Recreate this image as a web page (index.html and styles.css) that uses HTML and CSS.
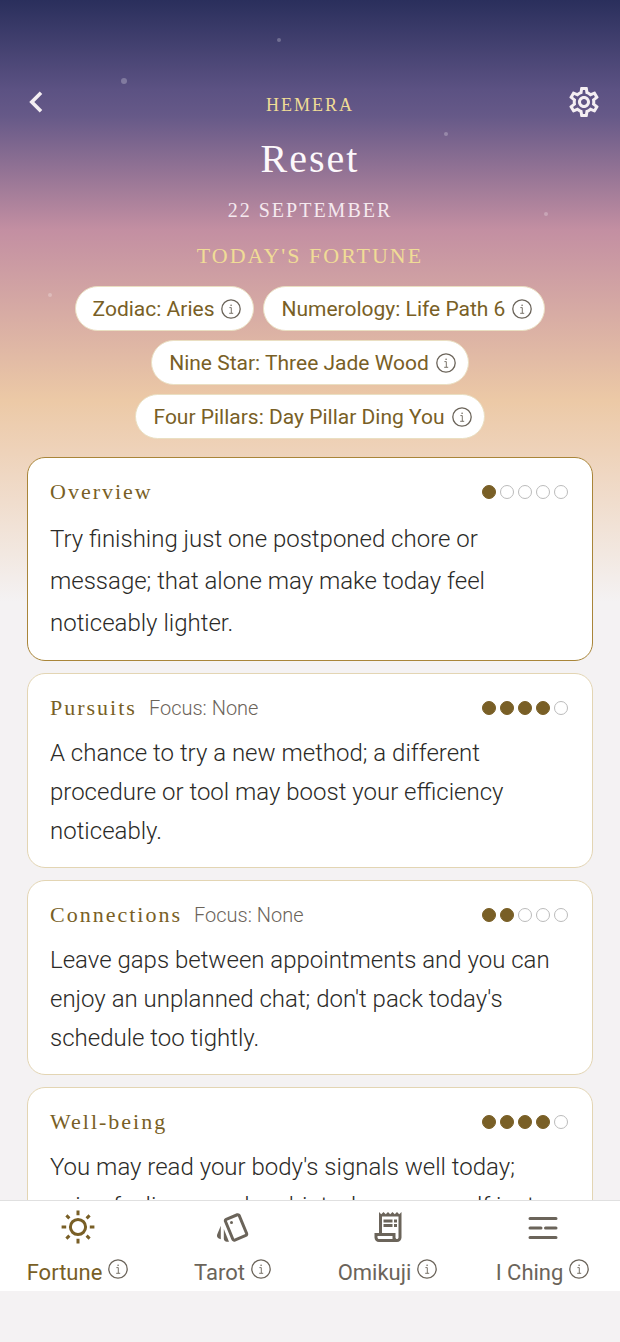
FILE: index.html
```html
<!DOCTYPE html>
<html lang="en">
<head>
    <meta charset="UTF-8">
    <meta name="viewport" content="width=device-width, initial-scale=1.0">
    <title>Hemera</title>
    <link rel="stylesheet" href="styles.css">
</head>
<body>
    <svg class="sprite" aria-hidden="true">
        <symbol id="info" viewBox="0 0 20 20">
            <circle cx="10" cy="10" r="9.2" fill="none" stroke="currentColor" stroke-width="1.3"/>
            <path d="M8.4 8.6h1.900v5.600M8.2 14.300h4" fill="none" stroke="currentColor" stroke-width="0.9"/>
            <circle cx="10.1" cy="6.3" r="0.8" fill="currentColor"/>
        </symbol>
    </svg>

    <!-- Stars in the sky -->
    <div class="stars" aria-hidden="true">
        <span class="star star-1"></span>
        <span class="star star-2"></span>
        <span class="star star-3"></span>
        <span class="star star-4"></span>
        <span class="star star-5"></span>
    </div>

    <header class="header">
        <button class="icon-button back" type="button" aria-label="Back">
            <svg width="36" height="36" viewBox="0 0 36 36" fill="none" stroke="currentColor" stroke-width="3.6"><path d="M23 8.800l-9.200 9.200 9.200 9.200"/></svg>
        </button>
        <div class="titles">
            <p class="brand">HEMERA</p>
            <h1>Reset</h1>
            <p class="date">22 SEPTEMBER</p>
            <p class="subtitle">TODAY'S FORTUNE</p>
        </div>
        <button class="icon-button settings" type="button" aria-label="Settings">
            <svg width="36" height="36" viewBox="0 0 24 24" fill="currentColor"><path d="M19.43 12.98c.04-.32.07-.64.07-.98 0-.34-.03-.66-.07-.98l2.11-1.65c.19-.15.24-.42.12-.64l-2-3.46c-.09-.16-.26-.25-.44-.25-.06 0-.12.01-.17.03l-2.49 1c-.52-.4-1.08-.73-1.69-.98l-.38-2.65C14.46 2.18 14.25 2 14 2h-4c-.25 0-.46.18-.49.42l-.38 2.65c-.61.25-1.17.59-1.69.98l-2.49-1c-.06-.02-.12-.03-.18-.03-.17 0-.34.09-.43.25l-2 3.46c-.13.22-.07.49.12.64l2.11 1.65c-.04.32-.07.65-.07.98 0 .33.03.66.07.98l-2.11 1.65c-.19.15-.24.42-.12.64l2 3.46c.09.16.26.25.44.25.06 0 .12-.01.17-.03l2.49-1c.52.4 1.08.73 1.69.98l.38 2.65c.03.24.24.42.49.42h4c.25 0 .46-.18.49-.42l.38-2.65c.61-.25 1.17-.59 1.69-.98l2.49 1c.06.02.12.03.18.03.17 0 .34-.09.43-.25l2-3.46c.12-.22.07-.49-.12-.64l-2.11-1.65zm-1.98-1.71c.04.31.05.52.05.73 0 .21-.02.43-.05.73l-.14 1.13.89.7 1.08.84-.7 1.21-1.27-.51-1.04-.42-.9.68c-.43.32-.84.56-1.25.73l-1.06.43-.16 1.13-.2 1.35h-1.4l-.19-1.35-.16-1.13-1.06-.43c-.43-.18-.83-.41-1.23-.71l-.91-.7-1.06.43-1.27.51-.7-1.21 1.08-.84.89-.7-.14-1.13c-.03-.31-.05-.54-.05-.74s.02-.43.05-.73l.14-1.13-.89-.7-1.08-.84.7-1.21 1.27.51 1.04.42.9-.68c.43-.32.84-.56 1.25-.73l1.06-.43.16-1.13.2-1.35h1.39l.19 1.35.16 1.13 1.06.43c.43.18.83.41 1.23.71l.91.7 1.06-.43 1.27-.51.7 1.21-1.07.85-.89.7.14 1.13zM12 8c-2.21 0-4 1.79-4 4s1.79 4 4 4 4-1.79 4-4-1.79-4-4-4zm0 6c-1.1 0-2-.9-2-2s.9-2 2-2 2 .9 2 2-.9 2-2 2z"/></svg>
        </button>
    </header>

    <main class="content">
        <div class="tags">
            <button class="tag" type="button">Zodiac: Aries <svg class="info"><use href="#info"/></svg></button>
            <button class="tag" type="button">Numerology: Life Path 6 <svg class="info"><use href="#info"/></svg></button>
            <button class="tag" type="button">Nine Star: Three Jade Wood <svg class="info"><use href="#info"/></svg></button>
            <button class="tag" type="button">Four Pillars: Day Pillar Ding You <svg class="info"><use href="#info"/></svg></button>
        </div>

        <section class="card overview">
            <div class="card-head">
                <h2>Overview</h2>
                <div class="score" role="img" aria-label="1 of 5">
                    <i class="on"></i><i></i><i></i><i></i><i></i>
                </div>
            </div>
            <p>Try finishing just one postponed chore or message; that alone may make today feel noticeably lighter.</p>
        </section>

        <section class="card">
            <div class="card-head">
                <h2>Pursuits</h2>
                <span class="focus">Focus: None</span>
                <div class="score" role="img" aria-label="4 of 5">
                    <i class="on"></i><i class="on"></i><i class="on"></i><i class="on"></i><i></i>
                </div>
            </div>
            <p>A chance to try a new method; a different procedure or tool may boost your efficiency noticeably.</p>
        </section>

        <section class="card">
            <div class="card-head">
                <h2>Connections</h2>
                <span class="focus">Focus: None</span>
                <div class="score" role="img" aria-label="2 of 5">
                    <i class="on"></i><i class="on"></i><i></i><i></i><i></i>
                </div>
            </div>
            <p>Leave gaps between appointments and you can enjoy an unplanned chat; don't pack today's schedule too tightly.</p>
        </section>

        <section class="card">
            <div class="card-head">
                <h2>Well-being</h2>
                <div class="score" role="img" aria-label="4 of 5">
                    <i class="on"></i><i class="on"></i><i class="on"></i><i class="on"></i><i></i>
                </div>
            </div>
            <p>You may read your body's signals well today; using feelings as clear hints, keep yourself just right.</p>
        </section>
    </main>

    <nav class="tabs">
        <a class="tab active" href="#fortune">
            <svg class="tab-icon" viewBox="0 0 36 36" fill="none" stroke="currentColor" stroke-width="3">
                <circle cx="18" cy="18" r="7.6"/>
                <path d="M18 1.6v4.6M18 29.8v4.6M1.6 18h4.6M29.8 18h4.6M6.4 6.4l3 3M26.6 26.6l3 3M29.6 6.4l-3 3M9.4 26.6l-3 3"/>
            </svg>
            <span class="tab-label">Fortune <svg class="info"><use href="#info"/></svg></span>
        </a>
        <a class="tab" href="#tarot">
            <svg class="tab-icon" viewBox="0 0 24 24" fill="currentColor"><path d="M2.53 19.65l1.34.56v-9.03l-2.43 5.86c-.41 1.02.08 2.19 1.09 2.61zm19.5-3.7L17.07 3.98c-.31-.75-1.04-1.21-1.81-1.23-.26 0-.53.04-.79.15L7.1 5.95c-.75.31-1.21 1.03-1.23 1.8-.01.27.04.54.15.8l4.96 11.97c.31.76 1.05 1.22 1.83 1.23.26 0 .52-.05.77-.15l7.36-3.05c1.02-.42 1.51-1.59 1.09-2.6zm-9.2 3.8L7.87 7.79l7.35-3.04h.01l4.95 11.95-7.35 3.05z"/><circle cx="11" cy="9" r="1"/><path d="M5.88 19.75c0 1.1.9 2 2 2h1.45l-3.45-8.34v6.34z"/></svg>
            <span class="tab-label">Tarot <svg class="info"><use href="#info"/></svg></span>
        </a>
        <a class="tab" href="#omikuji">
            <svg class="tab-icon" viewBox="0 0 24 24" fill="currentColor"><path d="M19.5 3.5 18 2l-1.5 1.5L15 2l-1.500 1.500L12 2l-1.500 1.500L9 2 7.500 3.500 6 2v14H3v3c0 1.660 1.340 3 3 3h12c1.660 0 3-1.340 3-3V2l-1.500 1.500zM15 20H6c-.55 0-1-.45-1-1v-1h10v2zm4-1c0 .55-.45 1-1 1s-1-.45-1-1v-3H8V5h11v14z"/><path d="M9 7h6v2H9zM16 7h2v2h-2zM9 10h6v2H9zM16 10h2v2h-2z"/></svg>
            <span class="tab-label">Omikuji <svg class="info"><use href="#info"/></svg></span>
        </a>
        <a class="tab" href="#iching">
            <svg class="tab-icon" viewBox="0 0 36 36" fill="none" stroke="currentColor" stroke-width="3" stroke-linecap="round">
                <path d="M5 9.500h26M5 19h11M20.500 19h10.500M5 28.500h26"/>
            </svg>
            <span class="tab-label">I Ching <svg class="info"><use href="#info"/></svg></span>
        </a>
    </nav>
</body>
</html>
```

FILE: styles.css
```css
* {
    box-sizing: border-box;
}

body {
    margin: 0;
    height: 100vh;
    padding-bottom: 51px;
    display: flex;
    flex-direction: column;
    overflow: hidden;
    position: relative;
    font-family: Roboto, "Noto Sans", sans-serif;
    color: #2b2a27;
    background: #f4f2f3 linear-gradient(#2a2f5c 0, #5c5283 90px, #665988 116px, #c38fa2 230px, #ecc9a6 400px, #eed2b9 450px, #f4f2f3 602px) no-repeat;
}

h1, h2, p {
    margin: 0;
    font-weight: normal;
}

.sprite {
    position: absolute;
    width: 0;
    height: 0;
}

.star {
    position: absolute;
    width: 4px;
    height: 4px;
    border-radius: 50%;
    background: rgba(255, 255, 255, 0.25);
}

.star-1 { left: 20%; top: 78px; width: 6px; height: 6px; margin-left: -3px; }
.star-2 { left: 45%; top: 38px; margin-left: -2px; }
.star-3 { left: 72%; top: 132px; margin-left: -2px; }
.star-4 { left: 88%; top: 212px; margin-left: -2px; }
.star-5 { left: 8%; top: 293px; margin-left: -2px; }

.header {
    display: flex;
    justify-content: space-between;
    align-items: flex-start;
    padding: 84px 18px 0;
}

.icon-button {
    display: flex;
    padding: 0;
    border: none;
    background: none;
    color: #f4eef2;
    cursor: pointer;
}

.titles {
    text-align: center;
    font-family: "Liberation Serif", serif;
}

.brand {
    font-size: 18px;
    line-height: 24px;
    padding-top: 9px;
    letter-spacing: 2px;
    color: #f0dc96;
}

h1 {
    font-size: 40px;
    line-height: 48px;
    padding-top: 18px;
    letter-spacing: 2px;
    color: #fcf8fb;
}

.date {
    font-size: 20px;
    line-height: 28px;
    padding-top: 13px;
    letter-spacing: 2px;
    color: #f5e9ef;
}

.subtitle {
    font-size: 22px;
    line-height: 28px;
    padding-top: 18px;
    letter-spacing: 2px;
    color: #f0dc96;
}

.content {
    flex: 1;
    min-height: 0;
    overflow: hidden;
    display: flex;
    flex-direction: column;
    gap: 12px;
    padding: 16px 27px 0;
}

.tags {
    display: flex;
    flex-wrap: wrap;
    justify-content: center;
    gap: 9px;
    margin-bottom: 6px;
}

.tag {
    display: flex;
    align-items: center;
    gap: 7px;
    height: 45px;
    padding: 0 12px 0 17px;
    border: 1px solid #eadfc2;
    border-radius: 23px;
    background: #fff;
    color: #795f26;
    font-family: inherit;
    font-size: 21px;
    cursor: pointer;
}

.info {
    width: 20px;
    height: 20px;
    flex: none;
    color: #6b645a;
}

.card {
    flex: none;
    padding: 16px 24px 16px 22px;
    border: 1px solid #e3d5b3;
    border-radius: 18px;
    background: #fff;
}

.card-head {
    display: flex;
    align-items: center;
    gap: 12px;
    height: 36px;
    margin-bottom: 8px;
}

h2 {
    font-family: "Liberation Serif", serif;
    font-size: 22px;
    letter-spacing: 2px;
    color: #795f26;
}

.focus {
    font-size: 20px;
    font-weight: 300;
    color: #6b645a;
}

.score {
    display: flex;
    gap: 4px;
    margin-left: auto;
}

.score i {
    width: 14px;
    height: 14px;
    border: 1px solid #bbb;
    border-radius: 50%;
}

.score .on {
    border-color: #795f26;
    background: #795f26;
}

.card p {
    font-size: 24px;
    font-weight: 300;
    line-height: 39px;
}

.overview {
    border-color: #a98539;
}

.overview p {
    line-height: 42px;
}

.tabs {
    flex: none;
    display: grid;
    grid-template-columns: repeat(4, 1fr);
    height: 91px;
    border-top: 1px solid #e0e0e0;
    background: #fff;
}

.tab {
    display: flex;
    flex-direction: column;
    align-items: center;
    gap: 14px;
    padding-top: 8px;
    color: #6b645a;
    text-decoration: none;
}

.tab-icon {
    width: 36px;
    height: 36px;
}

.tab-label {
    display: flex;
    gap: 6px;
    font-size: 22px;
    line-height: 28px;
}

.active {
    color: #795f26;
}
```
